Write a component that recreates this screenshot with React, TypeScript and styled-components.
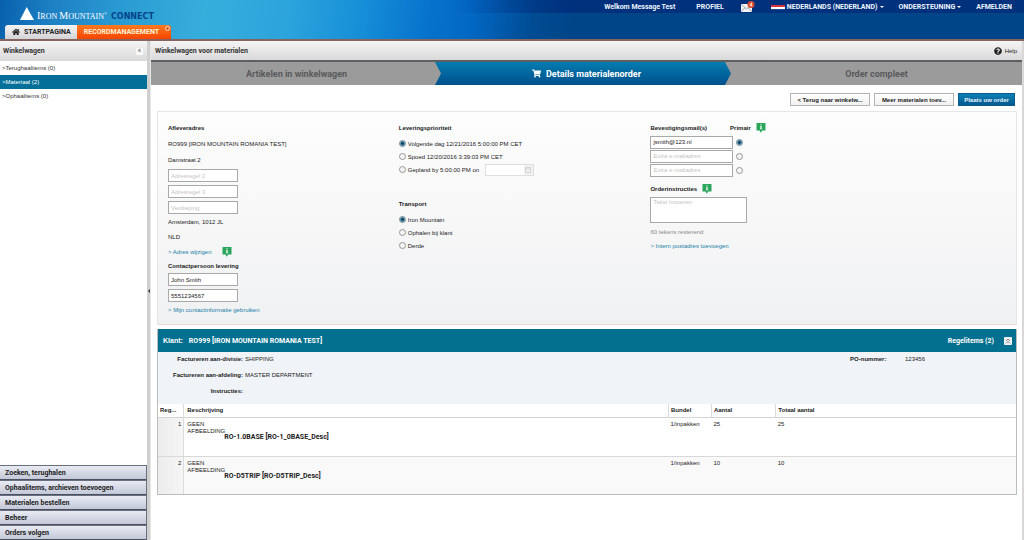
import React from "react";
import styled, { createGlobalStyle } from "styled-components";
import { FaHome, FaShoppingCart, FaQuestionCircle } from "react-icons/fa";

const Global = createGlobalStyle`
  * { box-sizing: border-box; }
  html, body { margin: 0; padding: 0; }
  body { font-family: "Liberation Sans", Arial, sans-serif; font-size: 6px; line-height: 8px; color: #222; background: #fff; }
  button, input, textarea { font: inherit; color: inherit; margin: 0; }
  a { color: inherit; text-decoration: none; }
  h1, h2, h3, ul, dl, dd, p, fieldset { margin: 0; padding: 0; border: 0; font-size: inherit; list-style: none; }
`;

const Page = styled.div`
  min-height: 100vh;
  display: flex;
  flex-direction: column;
`;

const Header = styled.header`
  height: 41px;
  display: flex;
  justify-content: space-between;
  border-bottom: 2px solid #86655f;
  background:
    linear-gradient(90deg, rgba(0, 24, 110, 0), rgba(0, 24, 110, 0.45) 20%) right top / 56% 13px no-repeat,
    linear-gradient(97deg, #0860ac 0%, #1d80c4 5%, #2a9bd2 12%, #36aedc 20%, #2ca4dc 28%, #1790d8 35%, #0672cc 42%, #0268c4 46%, #004c94 52%, #004588 56%, #004588 100%);
`;

const Brand = styled.div`
  display: flex;
  flex-direction: column;
  justify-content: space-between;
  padding: 7px 0 0 5px;
`;

const Logo = styled.a`
  display: flex;
  align-items: flex-end;
  height: 14px;
  margin-left: 15px;
  gap: 4px;
  color: #fff;
`;

const LogoName = styled.span`
  margin-left: -1px;
  font-family: "Liberation Serif", serif;
  font-size: 8px;
  line-height: 8px;
  big { font-size: 10px; }
  sup { font-size: 4px; line-height: 4px; }
`;

const LogoProduct = styled.span`
  font-family: "DejaVu Sans", sans-serif;
  font-weight: bold;
  font-size: 8px;
  line-height: 8px;
  color: #05438a;
`;

const Tabs = styled.nav`
  display: flex;
`;

const Tab = styled.a<{ $active?: boolean }>`
  display: flex;
  align-items: center;
  gap: 4px;
  height: 14px;
  padding: 0 ${(p) => (p.$active ? "12px" : "6px")} 0 7px;
  position: relative;
  font: bold 7px/14px Roboto, sans-serif;
  color: ${(p) => (p.$active ? "#fff2da" : "#222")};
  background: ${(p) => (p.$active ? "linear-gradient(#ff7a1f, #f64500)" : "linear-gradient(#f4f4f4, #d4d4d8)")};
  border-radius: ${(p) => (p.$active ? "0 3px 0 0" : "3px 0 0 0")};
`;

const TabClose = styled.button`
  position: absolute;
  right: 1px;
  top: 1px;
  width: 5px;
  height: 5px;
  padding: 0;
  border: 1px solid #ffe0c4;
  border-radius: 50%;
  background: #d95b25;
`;

const UserNav = styled.nav`
  display: flex;
  align-items: center;
  height: 14px;
  padding-right: 12px;
  gap: 15px;
  font: bold 7px/14px Roboto, sans-serif;
  color: #f0f5fb;
`;

const NavLink = styled.a`
  display: flex;
  align-items: center;
  gap: 2px;
`;

const Welcome = styled.span`
  margin-right: 6px;
`;

const Caret = styled.span`
  border: 2px solid transparent;
  border-top-color: #fff;
  border-bottom-width: 0;
`;

const Body = styled.div`
  flex: 1;
  display: flex;
  align-items: stretch;
`;

const Sidebar = styled.aside`
  width: 147px;
  flex: none;
  display: flex;
  flex-direction: column;
`;

const BarTitle = styled.div`
  height: 20px;
  display: flex;
  align-items: center;
  justify-content: space-between;
  padding: 0 4px 0 3px;
  font: bold 7px/8px Roboto, sans-serif;
  color: #333;
  background: linear-gradient(#f5f5f5, #d9d9d9);
`;

const MainTitle = styled(BarTitle)`
  height: 21px;
  padding: 0 5px 0 4px;
  border-bottom: 2px solid #5d5f61;
`;

const Collapse = styled.button`
  width: 7px;
  height: 7px;
  padding: 0;
  border: 0;
  border-radius: 1px;
  background: #f8f8f8;
  font-weight: normal;
  line-height: 6px;
  color: #555;
`;

const CartList = styled.ul`
  flex: 1;
`;

const CartItem = styled.li<{ $active?: boolean }>`
  height: 14px;
  padding-left: 2px;
  line-height: 14px;
  color: ${(p) => (p.$active ? "#fff" : "#333")};
  background: ${(p) => (p.$active ? "#04709a" : "#fff")};
`;

const MenuButton = styled.button`
  display: block;
  width: 100%;
  height: 15px;
  padding: 0 5px;
  text-align: left;
  font: bold 7px/12px Roboto, sans-serif;
  color: #222;
  border: 1px solid #6b7080;
  border-left: 0;
  border-bottom: 1px solid #4b5061;
  background: linear-gradient(#e9ebf3, #c3c8d8);
`;

const Splitter = styled.div`
  width: 4px;
  flex: none;
  display: flex;
  align-items: center;
  background: #cfcfcf;
  border-right: 1px solid #e6e6e6;
`;

const SplitHandle = styled.span`
  margin-left: 1px;
  border: 2px solid transparent;
  border-right-color: #333;
  border-left-width: 0;
`;

const Main = styled.main`
  flex: 1;
  min-width: 0;
  border-right: 2px solid #d8d8d8;
`;

const Help = styled.a`
  display: flex;
  align-items: center;
  gap: 3px;
  font: 6px/8px "Liberation Sans", Arial, sans-serif;
  color: #222;
`;

const Steps = styled.div`
  display: grid;
  grid-template-columns: 284fr 296fr 291fr;
  height: 23px;
  background: #9b9b9b;
`;

const Step = styled.div<{ $active?: boolean }>`
  display: flex;
  align-items: center;
  justify-content: center;
  gap: 5px;
  font: bold 9px/12px Roboto, sans-serif;
  color: ${(p) => (p.$active ? "#fff" : "#58595b")};
  background: ${(p) => (p.$active ? "linear-gradient(#047cb0, #00508c)" : "none")};
  clip-path: ${(p) => (p.$active ? "polygon(0 0, calc(100% - 6px) 0, 100% 50%, calc(100% - 6px) 100%, 0 100%, 6px 50%)" : "none")};
  &:not(:last-child) { padding-left: 7px; }
`;

const Actions = styled.div`
  display: flex;
  justify-content: flex-end;
  gap: 4px;
  padding: 8px 7px 5px 0;
`;

const Action = styled.button<{ $primary?: boolean }>`
  width: ${(p) => (p.$primary ? "57px" : "80px")};
  height: 13px;
  padding: 0;
  font-weight: bold;
  white-space: nowrap;
  color: ${(p) => (p.$primary ? "#e8f4fb" : "#222")};
  border: 1px solid ${(p) => (p.$primary ? "#0a5a92" : "#b4b4b4")};
  background: ${(p) => (p.$primary ? "linear-gradient(#0d80b5, #04598f)" : "linear-gradient(#fff, #f1f1f1)")};
`;

const FormPanel = styled.form`
  display: grid;
  grid-template-columns: 231fr 252fr 366fr;
  margin: 0 5px 4px 6px;
  padding: 8px 0 7px 10px;
  border: 1px solid #e4e6e8;
  border-bottom-color: #f0d8d4;
  background: linear-gradient(#fdfdfd, #f0f1f2);
`;

const Column = styled.div`
  display: flex;
  flex-direction: column;
  align-items: flex-start;
`;

const Heading = styled.h3<{ $tight?: boolean }>`
  display: flex;
  align-items: center;
  height: ${(p) => (p.$tight ? "13px" : "16px")};
  color: #222;
`;

const Line = styled.p`
  line-height: 16px;
`;

const ShortLine = styled.p`
  line-height: 15px;
`;

const Fields = styled.div`
  display: flex;
  flex-direction: column;
  gap: 3px;
  padding: 1px 0;
`;

const Field = styled.input`
  display: block;
  width: 70px;
  height: 13px;
  padding: 0 2px;
  border: 1px solid #a9a9a9;
  border-radius: 0;
  background: #fff;
  outline: 0;
  &::placeholder { color: #c4c4c4; opacity: 1; }
`;

const LinkLine = styled.div`
  display: flex;
  align-items: center;
  height: 14px;
  gap: 10px;
  color: #1b7ea8;
`;

const RadioLabel = styled.label`
  display: flex;
  align-items: center;
  height: 13px;
  gap: 2px;
`;

const Radio = styled.input`
  appearance: none;
  width: 7px;
  height: 7px;
  flex: none;
  border: 1px solid #959595;
  border-radius: 50%;
  background: #f4f4f4;
  &:checked { background: radial-gradient(circle, #0c4668 0 1px, #5f93ab 2px, #cfdfe6 3px); border-color: #6e8794; }
`;

const RadioGroup = styled.fieldset`
  margin: 1px 0 20px;
`;

const DateBox = styled.span`
  display: flex;
  align-items: center;
  margin-left: 4px;
  border: 1px solid #dedede;
  background: #fff;
`;

const DateInput = styled(Field)`
  width: 38px;
  height: 10px;
  border: 0;
`;

const DateButton = styled.button`
  width: 9px;
  height: 10px;
  padding: 2px 1px;
  border: 0;
  background: #f2f2f2;
  display: flex;
`;

const MailHead = styled(Heading)`
  gap: 23px;
  height: 15px;
  span { display: flex; gap: 5px; align-items: center; }
`;

const MailRow = styled.div`
  display: flex;
  align-items: center;
  gap: 3px;
  height: 14px;
`;

const MailField = styled(Field)`
  width: 83px;
`;

const OrderHead = styled(Heading)`
  gap: 5px;
  margin-top: 4px;
`;

const Notes = styled.textarea`
  display: block;
  width: 97px;
  height: 26px;
  padding: 0 2px;
  line-height: 8px;
  resize: none;
  border: 1px solid #a9a9a9;
  border-radius: 0;
  background: #fff;
  &::placeholder { color: #c4c4c4; opacity: 1; }
`;

const Remaining = styled.p`
  margin-top: 2px;
  line-height: 14px;
  color: #8c8c8c;
`;

const Order = styled.section`
  margin: 0 5px 0 6px;
  border: 1px solid #b9bdc0;
  border-top: 0;
`;

const OrderBar = styled.div`
  display: flex;
  align-items: center;
  height: 23px;
  padding: 0 4px 0 5px;
  color: #fff;
  font: bold 7px/12px Roboto, sans-serif;
  background: #04708f;
  h2 { font: bold 7px/12px "Liberation Sans", Arial, sans-serif; margin-right: 6px; }
`;

const ItemCount = styled.span`
  margin-left: auto;
  margin-right: 10px;
`;

const Toggle = styled.button`
  width: 8px;
  height: 8px;
  padding: 1px;
  border: 0;
  border-radius: 1px;
  background: #eef4f7;
  display: flex;
`;

const Details = styled.div`
  display: grid;
  grid-template-columns: 763fr 96fr;
  min-height: 52px;
  background: #f0f4f8;
`;

const DetailList = styled.dl`
  display: grid;
  grid-template-columns: 85px 1fr;
  grid-auto-rows: 16px;
  align-content: start;
  column-gap: 2px;
  line-height: 14px;
  dt { text-align: right; font-weight: bold; }
`;

const SideDetail = styled.dl`
  display: flex;
  justify-content: space-between;
  margin-left: -70px;
  margin-right: 91px;
  line-height: 14px;
  dt { font-weight: bold; }
`;

const Table = styled.table`
  width: 100%;
  table-layout: fixed;
  border-collapse: collapse;
  th { height: 13px; padding: 0 2px; text-align: left; border-left: 1px solid #dcdcdc; border-bottom: 1px solid #d4d4d4; }
  th:first-child { border-left: 0; }
  td { height: 39px; padding: 3px 2px 0; vertical-align: top; line-height: 7px; border-bottom: 1px solid #d8d8d8; }
  td:first-child { text-align: right; background: linear-gradient(90deg, #ececec, #f5f5f5); border-right: 1px solid #dcdcdc; }
  th:nth-child(2), td:nth-child(2) { padding-left: 3px; }
  tr:last-child td { height: 38px; border-bottom: 0; }
  tbody tr:nth-child(2) { background: #f9f9f9; }
`;

const Product = styled.div`
  display: flex;
  align-items: flex-end;
  height: 20px;
  strong { font: bold 7px/7px Roboto, sans-serif; }
`;

const NoImage = styled.span`
  width: 37px;
  height: 20px;
`;

const InfoIcon = () => (
  <svg width="10" height="10" viewBox="0 0 10 10" role="img" aria-label="Info">
    <path d="M0.500 0H9.500V7.500H6.200L4.800 9.800L3.500 7.500H0.500Z" fill="#2aa65c" />
    <path d="M4.400 1.200H5.700V2.200H4.400ZM3.900 2.900H5.700V5.500H6.200V6.300H3.900V5.500H4.400V3.700H3.900Z" fill="#e4f8ea" />
  </svg>
);

const rows = [
  { nr: 1, product: "RO-1.0BASE [RO-1_0BASE_Desc]", qty: 25 },
  { nr: 2, product: "RO-D5TRIP [RO-D5TRIP_Desc]", qty: 10 },
];

export default function App() {
  return (
    <Page>
      <Global />
      <Header>
        <Brand>
          <Logo href="#">
            <svg width="14" height="14" viewBox="0 0 14 14" aria-hidden="true">
              <path d="M6.700 0L14 13H0Z" fill="#fff" />
            </svg>
            <LogoName>
              <big>I</big>RON <big>M</big>OUNTAIN<sup>®</sup>
            </LogoName>
            <LogoProduct>CONNECT</LogoProduct>
          </Logo>
          <Tabs>
            <Tab href="#"><FaHome size={8} />STARTPAGINA</Tab>
            <Tab as="div" $active>RECORDMANAGEMENT<TabClose aria-label="Sluiten" /></Tab>
          </Tabs>
        </Brand>
        <UserNav>
          <Welcome>Welkom Message Test</Welcome>
          <NavLink href="#">PROFIEL</NavLink>
          <NavLink href="#" aria-label="Berichten">
            <svg width="17" height="12" viewBox="0 0 17 12">
              <path d="M2 3H13V11H2Z" fill="#f4f4f4" />
              <path d="M2 3L7.500 8L13 3M2 11L6 6.600M13 11L9 6.600" fill="none" stroke="#8996a8" strokeWidth="0.800" />
              <circle cx="12" cy="3.500" r="3.500" fill="#dc4a2c" />
              <path d="M12.600 5.500V1.700L10.800 4.300H13.400" fill="none" stroke="#fff" strokeWidth="0.700" />
            </svg>
          </NavLink>
          <NavLink href="#">
            <svg width="14" height="7" viewBox="0 0 14 7" aria-hidden="true">
              <path d="M0 1H14V3H0Z" fill="#d8323c" />
              <path d="M0 3H14V5H0Z" fill="#fff" />
              <path d="M0 5H14V6H0Z" fill="#1e4a9c" />
            </svg>
            NEDERLANDS (NEDERLAND)<Caret />
          </NavLink>
          <NavLink href="#">ONDERSTEUNING<Caret /></NavLink>
          <NavLink href="#">AFMELDEN</NavLink>
        </UserNav>
      </Header>
      <Body>
        <Sidebar>
          <BarTitle>Winkelwagen<Collapse aria-label="Inklappen">«</Collapse></BarTitle>
          <CartList>
            <CartItem><a href="#">&gt;Terughaalitems (0)</a></CartItem>
            <CartItem $active><a href="#">&gt;Materiaal (2)</a></CartItem>
            <CartItem><a href="#">&gt;Ophaalitems (0)</a></CartItem>
          </CartList>
          {["Zoeken, terughalen", "Ophaalitems, archieven toevoegen", "Materialen bestellen", "Beheer", "Orders volgen"].map((t) => (
            <MenuButton key={t}>{t}</MenuButton>
          ))}
        </Sidebar>
        <Splitter><SplitHandle /></Splitter>
        <Main>
          <MainTitle>
            Winkelwagen voor materialen
            <Help href="#"><FaQuestionCircle size={8} />Help</Help>
          </MainTitle>
          <Steps>
            <Step>Artikelen in winkelwagen</Step>
            <Step $active><FaShoppingCart size={9} />Details materialenorder</Step>
            <Step>Order compleet</Step>
          </Steps>
          <Actions>
            <Action>&lt; Terug naar winkelw...</Action>
            <Action>Meer materialen toev...</Action>
            <Action $primary>Plaats uw order</Action>
          </Actions>
          <FormPanel>
            <Column>
              <Heading>Afleveradres</Heading>
              <Line>RO999 [IRON MOUNTAIN ROMANIA TEST]</Line>
              <Line>Damstraat 2</Line>
              <Fields>
                <Field placeholder="Adresregel 2" aria-label="Adresregel 2" />
                <Field placeholder="Adresregel 3" aria-label="Adresregel 3" />
                <Field placeholder="Verdieping" aria-label="Verdieping" />
              </Fields>
              <ShortLine>Amsterdam, 1012 JL</ShortLine>
              <ShortLine>NLD</ShortLine>
              <LinkLine><a href="#">&gt; Adres wijzigen</a><InfoIcon /></LinkLine>
              <Heading $tight>Contactpersoon levering</Heading>
              <Fields>
                <Field defaultValue="John Smith" aria-label="Naam" />
                <Field defaultValue="5551234567" aria-label="Telefoon" />
              </Fields>
              <LinkLine><a href="#">&gt; Mijn contactinformatie gebruiken</a></LinkLine>
            </Column>
            <Column>
              <Heading>Leveringsprioriteit</Heading>
              <RadioGroup>
                <RadioLabel><Radio type="radio" name="prio" defaultChecked />Volgende dag 12/21/2016 5:00:00 PM CET</RadioLabel>
                <RadioLabel><Radio type="radio" name="prio" />Spoed 12/20/2016 3:39:03 PM CET</RadioLabel>
                <RadioLabel>
                  <Radio type="radio" name="prio" />Gepland by 5:00:00 PM on
                  <DateBox>
                    <DateInput aria-label="Datum" />
                    <DateButton type="button" aria-label="Kalender">
                      <svg width="6" height="6" viewBox="0 0 6 6"><path d="M0.500 0.500H5.500V5.500H0.500ZM0.500 2H5.500" fill="none" stroke="#d2d2d2" /></svg>
                    </DateButton>
                  </DateBox>
                </RadioLabel>
              </RadioGroup>
              <Heading>Transport</Heading>
              <RadioGroup>
                <RadioLabel><Radio type="radio" name="transport" defaultChecked />Iron Mountain</RadioLabel>
                <RadioLabel><Radio type="radio" name="transport" />Ophalen bij klant</RadioLabel>
                <RadioLabel><Radio type="radio" name="transport" />Derde</RadioLabel>
              </RadioGroup>
            </Column>
            <Column>
              <MailHead>Bevestigingsmail(s)<span>Primair <InfoIcon /></span></MailHead>
              <MailRow>
                <MailField defaultValue="jsmith@123.nl" aria-label="E-mail" />
                <Radio type="radio" name="mail" aria-label="Primair 1" defaultChecked />
              </MailRow>
              <MailRow>
                <MailField placeholder="Extra e-mailadres" aria-label="Extra e-mailadres 1" />
                <Radio type="radio" name="mail" aria-label="Primair 2" />
              </MailRow>
              <MailRow>
                <MailField placeholder="Extra e-mailadres" aria-label="Extra e-mailadres 2" />
                <Radio type="radio" name="mail" aria-label="Primair 3" />
              </MailRow>
              <OrderHead><label htmlFor="notes">Orderinstructies</label><InfoIcon /></OrderHead>
              <Notes id="notes" placeholder="Tekst invoeren" />
              <Remaining>60 tekens resterend</Remaining>
              <LinkLine><a href="#">&gt; Intern postadres toevoegen</a></LinkLine>
            </Column>
          </FormPanel>
          <Order>
            <OrderBar>
              <h2>Klant:</h2>
              RO999 [IRON MOUNTAIN ROMANIA TEST]
              <ItemCount>Regelitems (2)</ItemCount>
              <Toggle aria-label="Inklappen">
                <svg width="6" height="6" viewBox="0 0 6 6"><path d="M1 3L3 1L5 3M1 5.500L3 3.500L5 5.500" fill="none" stroke="#666" strokeWidth="0.800" /></svg>
              </Toggle>
            </OrderBar>
            <Details>
              <DetailList>
                <dt>Factureren aan-divisie:</dt><dd>SHIPPING</dd>
                <dt>Factureren aan-afdeling:</dt><dd>MASTER DEPARTMENT</dd>
                <dt>Instructies:</dt><dd />
              </DetailList>
              <SideDetail><dt>PO-nummer:</dt><dd>123456</dd></SideDetail>
            </Details>
            <Table>
              <colgroup>
                <col width="3%" /><col /><col width="5%" /><col width="7.5%" /><col width="28%" />
              </colgroup>
              <thead>
                <tr><th>Reg...</th><th>Beschrijving</th><th>Bundel</th><th>Aantal</th><th>Totaal aantal</th></tr>
              </thead>
              <tbody>
                {rows.map((r) => (
                  <tr key={r.nr}>
                    <td>{r.nr}</td>
                    <td><Product><NoImage>GEEN AFBEELDING</NoImage><strong>{r.product}</strong></Product></td>
                    <td>1/inpakken</td>
                    <td>{r.qty}</td>
                    <td>{r.qty}</td>
                  </tr>
                ))}
              </tbody>
            </Table>
          </Order>
        </Main>
      </Body>
    </Page>
  );
}
